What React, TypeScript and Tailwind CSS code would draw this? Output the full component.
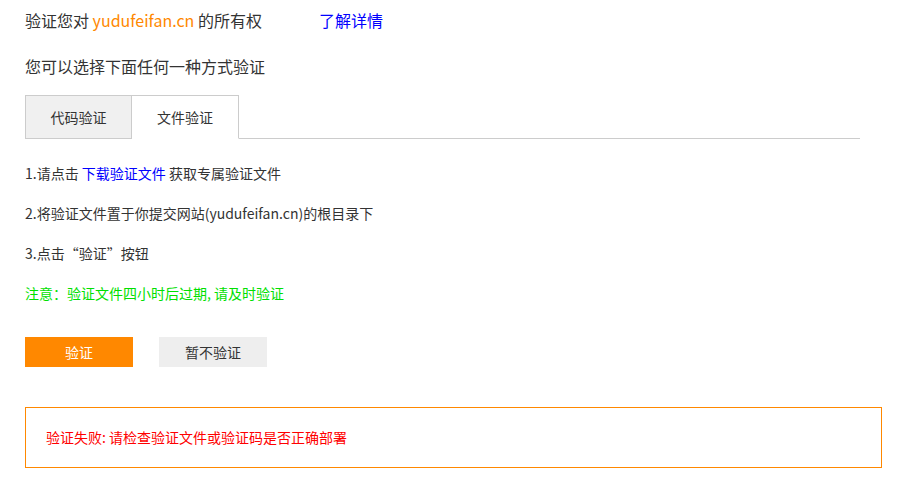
export default function App() {
  const font = { fontFamily: '"Microsoft YaHei", "Noto Sans CJK SC", "Noto Sans", sans-serif' };
  return (
    <div className="w-[898px] h-[493px] bg-white pl-[25px] text-[#333]" style={font}>
      <div className="flex h-[40px] items-center text-[16px]">
        <div className="w-[294px] whitespace-nowrap">
          验证您对 <span className="text-[#ff8800]">yudufeifan.cn</span> 的所有权
        </div>
        <a className="text-[#0000ff] whitespace-nowrap">了解详情</a>
      </div>
      <div className="mt-[6px] flex h-[40px] items-center text-[16px]">您可以选择下面任何一种方式验证</div>
      <div className="mt-[9px] flex w-[835px] border-b border-[#cccccc] text-[14px]">
        <div className="-mb-px flex h-[44px] w-[107px] items-center justify-center border border-[#cccccc] bg-[#f0f0f0]">
          代码验证
        </div>
        <div className="-mb-px flex h-[44px] w-[107px] items-center justify-center border border-l-0 border-b-white border-[#cccccc] bg-white">
          文件验证
        </div>
      </div>
      <div className="mt-[14px] text-[14px]">
        <div className="flex h-[40px] items-center whitespace-pre">
          1.请点击 <span className="text-[#0000ff]">下载验证文件</span> 获取专属验证文件
        </div>
        <div className="flex h-[40px] items-center">2.将验证文件置于你提交网站(yudufeifan.cn)的根目录下</div>
        <div className="flex h-[40px] items-center">3.点击“验证”按钮</div>
        <div className="flex h-[40px] items-center text-[#00e000]">注意：验证文件四小时后过期, 请及时验证</div>
      </div>
      <div className="mt-[24px] flex gap-[26px] text-[14px]">
        <button className="flex h-[30px] w-[108px] items-center justify-center bg-[#ff8800] text-white">验证</button>
        <button className="flex h-[30px] w-[108px] items-center justify-center bg-[#eeeeee] text-[#333]">暂不验证</button>
      </div>
      <div className="mt-[40px] flex h-[61px] w-[857px] items-center border border-[#ff8800] pl-[20px] text-[14px] text-[#ff0000]">
        验证失败: 请检查验证文件或验证码是否正确部署
      </div>
    </div>
  );
}
